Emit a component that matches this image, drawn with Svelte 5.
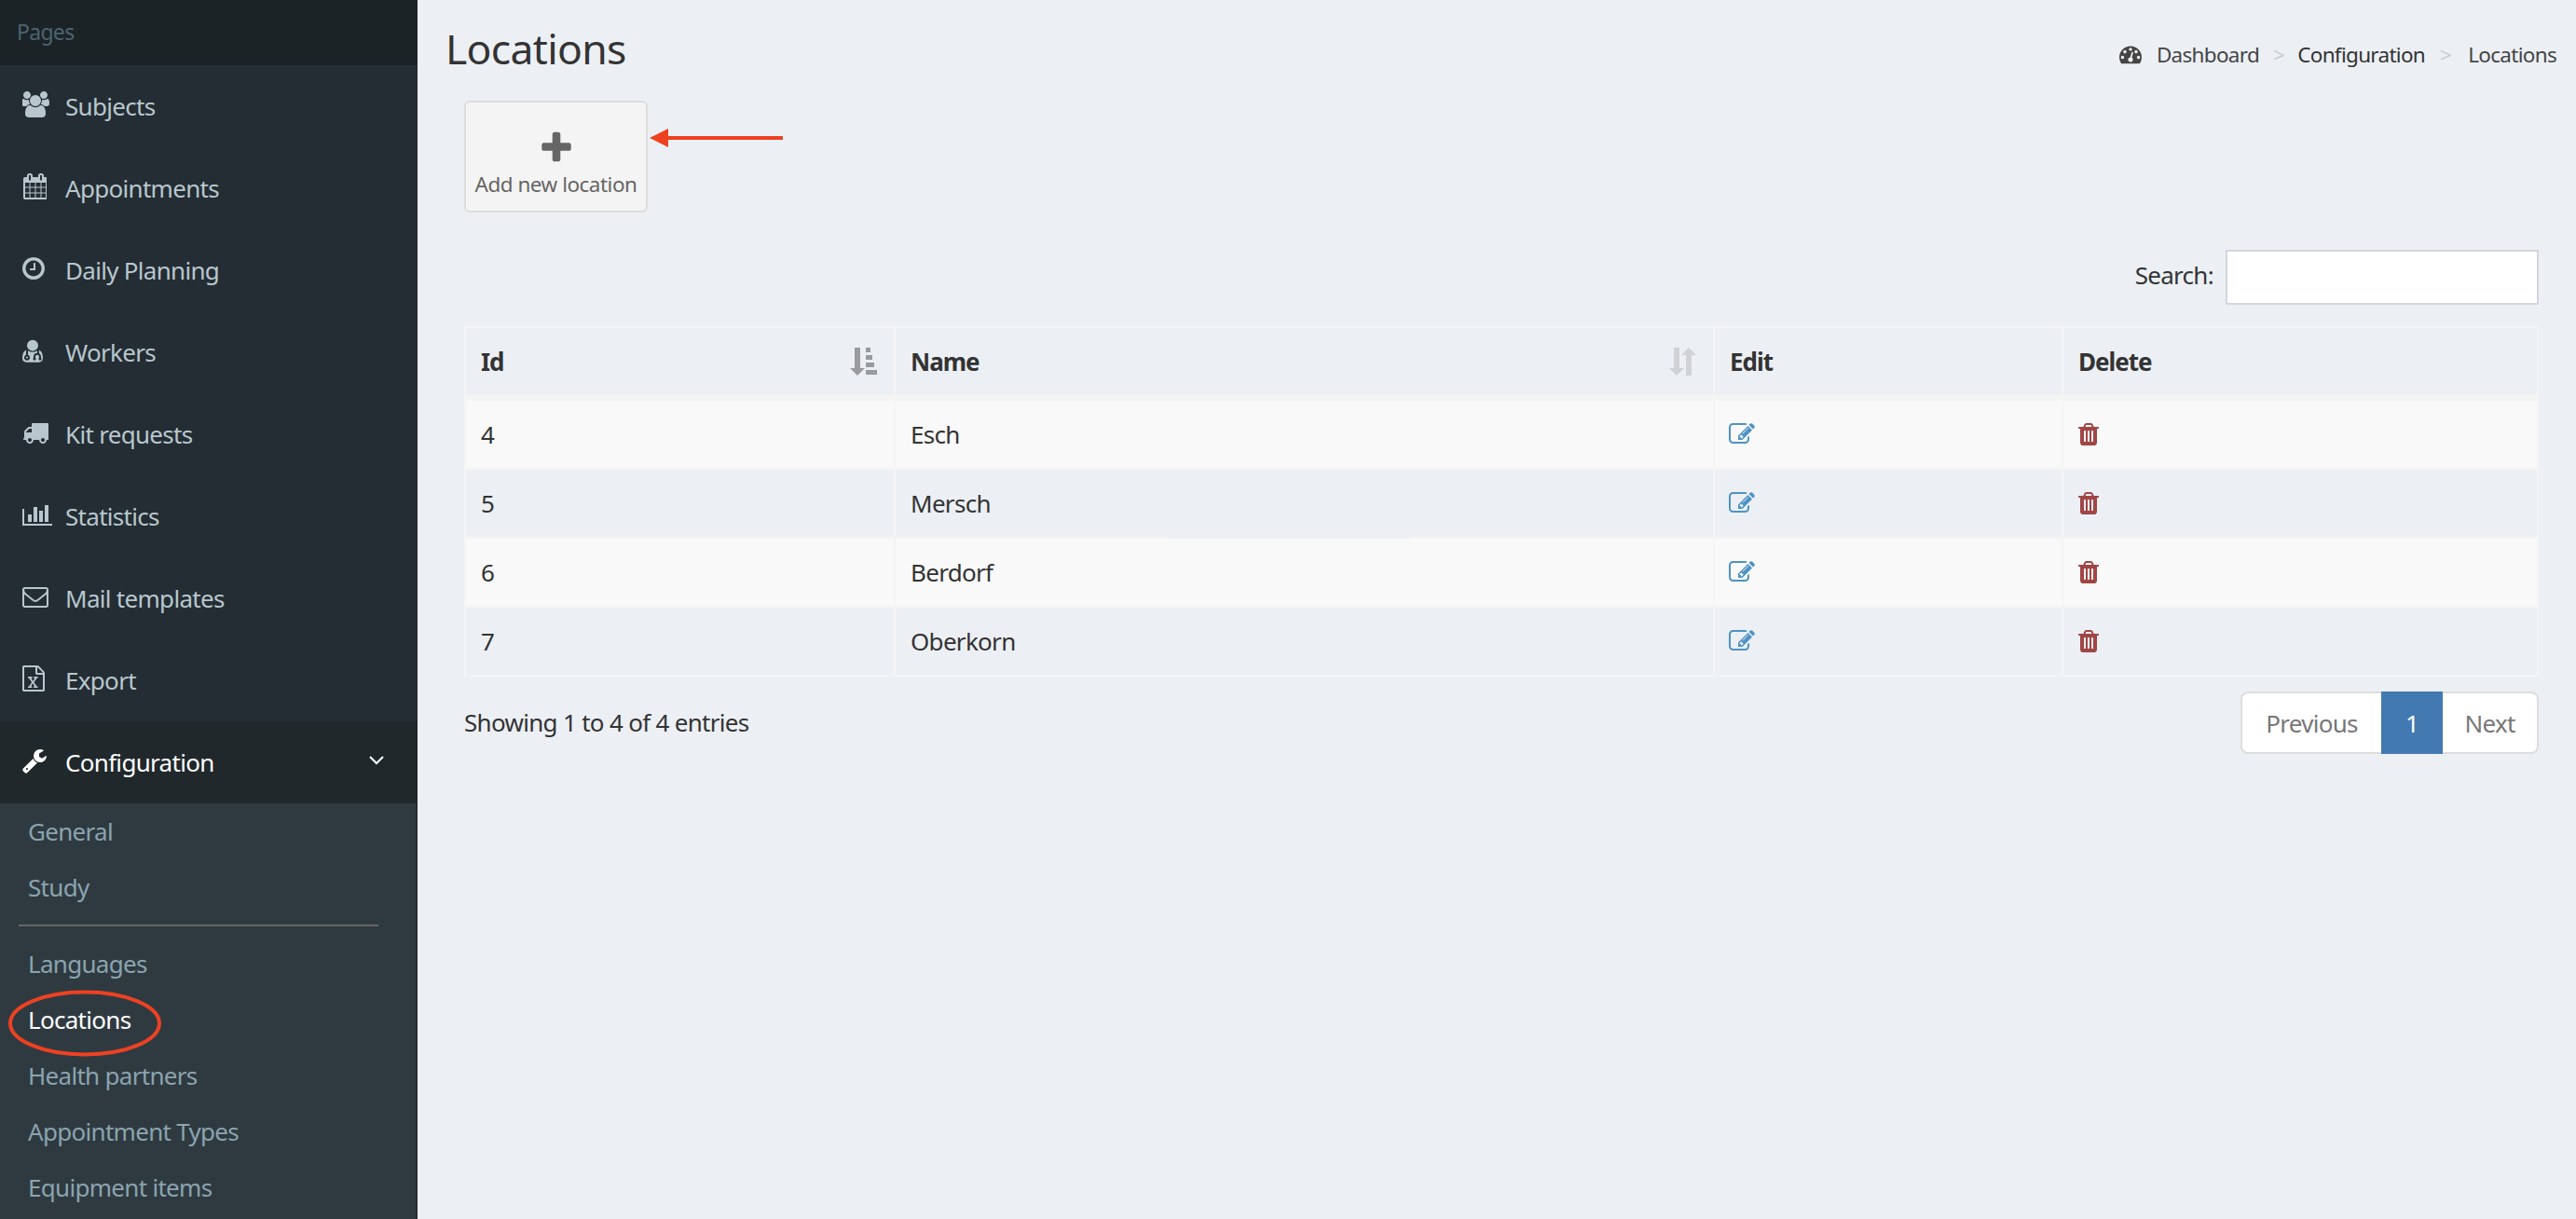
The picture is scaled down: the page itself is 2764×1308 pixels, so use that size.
<script>
    const ICONS = {
        users: { box: "0 0 2048 1792", d: "M529 896q-162 5-265 128h-134q-82 0-138-40.5t-56-118.5q0-353 124-353 6 0 43.5 21t97.5 42.5 119 21.5q67 0 133-23-5 37-5 66 0 139 81 256zm1071 637q0 120-73 189.5t-194 69.5h-874q-121 0-194-69.5t-73-189.5q0-53 3.5-103.5t14-109 26.5-108.5 43-97.5 62-81 85.5-53.5 111.5-20q10 0 43 21.5t73 48 107 48 135 21.5 135-21.5 107-48 73-48 43-21.5q61 0 111.5 20t85.5 53.5 62 81 43 97.5 26.5 108.5 14 109 3.5 103.5zm-1024-1277q0 106-75 181t-181 75-181-75-75-181 75-181 181-75 181 75 75 181zm704 384q0 159-112.5 271.5t-271.5 112.5-271.5-112.5-112.5-271.5 112.5-271.5 271.5-112.5 271.5 112.5 112.5 271.5zm576 225q0 78-56 118.5t-138 40.5h-134q-103-123-265-128 81-117 81-256 0-29-5-66 66 23 133 23 59 0 119-21.5t97.5-42.5 43.5-21q124 0 124 353zm-128-609q0 106-75 181t-181 75-181-75-75-181 75-181 181-75 181 75 75 181z" },
        calendar: { box: "0 0 1664 1792", d: "M192 1664h288v-288h-288v288zm352 0h320v-288h-320v288zm-352-352h288v-320h-288v320zm352 0h320v-320h-320v320zm-352-384h288v-288h-288v288zm736 736h320v-288h-320v288zm-384-736h320v-288h-320v288zm768 736h288v-288h-288v288zm-384-352h320v-320h-320v320zm-352-864v-288q0-13-9.5-22.5t-22.5-9.5h-64q-13 0-22.5 9.5t-9.5 22.5v288q0 13 9.5 22.5t22.5 9.5h64q13 0 22.5-9.5t9.5-22.5zm736 864h288v-320h-288v320zm-384-384h320v-288h-320v288zm384 0h288v-288h-288v288zm32-480v-288q0-13-9.5-22.5t-22.5-9.5h-64q-13 0-22.5 9.5t-9.5 22.5v288q0 13 9.5 22.5t22.5 9.5h64q13 0 22.5-9.5t9.5-22.5zm384-64v1280q0 52-38 90t-90 38h-1408q-52 0-90-38t-38-90v-1280q0-52 38-90t90-38h128v-96q0-66 47-113t113-47h64q66 0 113 47t47 113v96h384v-96q0-66 47-113t113-47h64q66 0 113 47t47 113v96h128q52 0 90 38t38 90z" },
        clock: { box: "0 0 1536 1792", d: "M896 544v448q0 14-9 23t-23 9h-320q-14 0-23-9t-9-23v-64q0-14 9-23t23-9h224v-352q0-14 9-23t23-9h64q14 0 23 9t9 23zm416 352q0-148-73-273t-198-198-273-73-273 73-198 198-73 273 73 273 198 198 273 73 273-73 198-198 73-273zm224 0q0 209-103 385.5t-279.5 279.5-385.5 103-385.5-103-279.5-279.5-103-385.5 103-385.5 279.5-279.5 385.5-103 385.5 103 279.5 279.5 103 385.5z" },
        userMd: { box: "0 0 1408 1792", d: "M384 1376q0 26-19 45t-45 19-45-19-19-45 19-45 45-19 45 19 19 45zm1024 69q0 121-73 190t-194 69h-874q-121 0-194-69t-73-190q0-68 5.5-131t24-138 47.5-132.5 81-103 120-60.5q-22 52-22 120v203q-58 20-93 70t-35 111q0 80 56 136t136 56 136-56 56-136q0-61-35.5-111t-92.5-70v-203q0-62 25-93 132 104 295 104t295-104q25 31 25 93v64q-106 0-181 75t-75 181v89q-32 29-32 71 0 40 28 68t68 28 68-28 28-68q0-42-32-71v-89q0-52 38-90t90-38 90 38 38 90v89q-32 29-32 71 0 40 28 68t68 28 68-28 28-68q0-42-32-71v-89q0-68-34.5-127.5t-93.5-93.5q0-10 .5-42.5t0-48-2.5-41.5-7-47-13-40q68 15 120 60.5t81 103 47.5 132.5 24 138 5.5 131zm-320-893q0 159-112.5 271.5t-271.5 112.5-271.5-112.5-112.5-271.5 112.5-271.5 271.5-112.5 271.5 112.5 112.5 271.5z" },
        truck: { box: "0 0 1792 1792", d: "M640 1408q0-52-38-90t-90-38-90 38-38 90 38 90 90 38 90-38 38-90zm-384-512h384v-256h-158q-13 0-22 9l-195 195q-9 9-9 22v30zm1280 512q0-52-38-90t-90-38-90 38-38 90 38 90 90 38 90-38 38-90zm256-1088v1024q0 15-4 26.5t-13.5 18.5-16.5 11.5-23.5 6-22.5 2-25.5 0-22.5-.5q0 106-75 181t-181 75-181-75-75-181h-384q0 106-75 181t-181 75-181-75-75-181h-64q-3 0-22.5.5t-25.5 0-22.5-2-23.5-6-16.5-11.5-13.5-18.5-4-26.5q0-26 19-45t45-19v-320q0-8-.5-35t0-38 2.5-34.5 6.5-37 14-30.5 22.5-30l198-198q19-19 50.5-32t58.5-13h160v-192q0-26 19-45t45-19h1024q26 0 45 19t19 45z" },
        chart: { box: "0 0 2048 1792", d: "M640 896v512h-256v-512h256zm384-512v1024h-256v-1024h256zm1024 1152v128h-2048v-1152h128v1024h1920zm-640-896v768h-256v-768h256zm384-384v1152h-256v-1152h256z" },
        envelope: { box: "0 0 1792 1792", d: "M1664 1504v-768q-32 36-69 66-268 206-426 338-51 43-83 67t-86.5 48.5-102.5 24.5h-2q-48 0-102.5-24.5t-86.5-48.5-83-67q-158-132-426-338-37-30-69-66v768q0 13 9.5 22.5t22.5 9.5h1472q13 0 22.5-9.5t9.5-22.5zm0-1051v-24.5l-.5-13-3-12.5-5.5-9-9-7.5-14-2.5h-1472q-13 0-22.5 9.5t-9.5 22.5q0 168 147 284 193 152 401 317 6 5 35 29.5t46 37.5 44.5 31.5 50.5 27.5 43 9h2q20 0 43-9t50.5-27.5 44.5-31.5 46-37.5 35-29.5q208-165 401-317 54-43 100.5-115.5t46.5-131.5zm128-37v1088q0 66-47 113t-113 47h-1472q-66 0-113-47t-47-113v-1088q0-66 47-113t113-47h1472q66 0 113 47t47 113z" },
        excel: { box: "0 0 1536 1792", d: "M1468 380q28 28 48 76t20 88v1152q0 40-28 68t-68 28h-1344q-40 0-68-28t-28-68v-1600q0-40 28-68t68-28h896q40 0 88 20t76 48zm-444-244v376h376q-10-29-22-41l-313-313q-12-12-41-22zm384 1528v-1024h-416q-40 0-68-28t-28-68v-416h-768v1536h1280zM383 1432v106h281v-106h-75l103-161q5-7 10-16.5t7.5-13.5 3.5-4h2q1 4 5 10 2 4 4.5 7.5t6 8 6.5 8.5l107 161h-76v106h291v-106h-68l-192-273 195-282h67v-107h-279v107h74l-103 159q-4 7-10 16.5t-9 13.5l-2 3h-2q-1-4-5-10-6-11-17-23l-106-159h76v-107h-290v107h68l189 272-194 283h-68z" },
        wrench: { box: "0 0 1664 1792", d: "M384 1472q0-26-19-45t-45-19-45 19-19 45 19 45 45 19 45-19 19-45zm644-420l-682 682q-37 37-90 37-52 0-91-37l-106-108q-38-36-38-90 0-53 38-91l681-681q39 98 114.5 173.5t173.5 114.5zm634-435q0 39-23 106-47 134-164.5 217.5t-258.5 83.5q-185 0-316.5-131.5t-131.5-316.5 131.5-316.5 316.5-131.5q58 0 121.5 16.5t107.5 46.5q16 11 16 28t-16 28l-293 169v224l193 107q5-3 79-48.5t135.5-81 70.5-35.5q15 0 23.5 10t8.5 25z" },
        plus: { box: "0 0 1408 1792", d: "M1408 736v192q0 40-28 68t-68 28h-416v416q0 40-28 68t-68 28h-192q-40 0-68-28t-28-68v-416h-416q-40 0-68-28t-28-68v-192q0-40 28-68t68-28h416v-416q0-40 28-68t68-28h192q40 0 68 28t28 68v416h416q40 0 68 28t28 68z" },
        dashboard: { box: "0 0 1792 1792", d: "M384 1152q0-53-37.5-90.5t-90.5-37.5-90.5 37.5-37.5 90.5 37.5 90.5 90.5 37.5 90.5-37.5 37.5-90.5zm192-448q0-53-37.5-90.5t-90.5-37.5-90.5 37.5-37.5 90.5 37.5 90.5 90.5 37.5 90.5-37.5 37.5-90.5zm428 481l101-382q6-26-7.5-48.5t-38.5-29.5-48 6.5-30 39.5l-101 382q-60 5-107 43.5t-63 98.5q-20 77 20 146t117 89 146-20 89-117q16-60-6-117t-72-91zm660-33q0-53-37.5-90.5t-90.5-37.5-90.5 37.5-37.5 90.5 37.5 90.5 90.5 37.5 90.5-37.5 37.5-90.5zm-640-640q0-53-37.5-90.5t-90.5-37.5-90.5 37.5-37.5 90.5 37.5 90.5 90.5 37.5 90.5-37.5 37.5-90.5zm448 192q0-53-37.5-90.5t-90.5-37.5-90.5 37.5-37.5 90.5 37.5 90.5 90.5 37.5 90.5-37.5 37.5-90.5zm320 448q0 261-141 483-19 29-54 29h-1402q-35 0-54-29-141-221-141-483 0-182 71-348t191-286 286-191 348-71 348 71 286 191 191 286 71 348z" },
        edit: { box: "0 0 1792 1792", d: "M888 1184l116-116-152-152-116 116v56h96v96h56zm440-720q-16-16-33 1l-350 350q-17 17-1 33t33-1l350-350q17-17 1-33zm80 594v190q0 119-84.5 203.5t-203.5 84.5h-832q-119 0-203.5-84.5t-84.5-203.5v-832q0-119 84.5-203.5t203.5-84.5h832q63 0 117 25 15 7 18 23 3 17-9 29l-49 49q-14 14-32 8-23-6-45-6h-832q-66 0-113 47t-47 113v832q0 66 47 113t113 47h832q66 0 113-47t47-113v-126q0-13 9-22l64-64q15-15 35-7t20 29zm-96-738l288 288-672 672h-288v-288zm444 132l-92 92-288-288 92-92q28-28 68-28t68 28l152 152q28 28 28 68t-28 68z" },
        trash: { box: "0 0 1408 1792", d: "M512 1376v-704q0-14-9-23t-23-9h-64q-14 0-23 9t-9 23v704q0 14 9 23t23 9h64q14 0 23-9t9-23zm256 0v-704q0-14-9-23t-23-9h-64q-14 0-23 9t-9 23v704q0 14 9 23t23 9h64q14 0 23-9t9-23zm256 0v-704q0-14-9-23t-23-9h-64q-14 0-23 9t-9 23v704q0 14 9 23t23 9h64q14 0 23-9t9-23zm-544-992h448l-48-117q-7-9-17-11h-317q-10 2-17 11zm928 32v64q0 14-9 23t-23 9h-96v948q0 83-47 143.5t-113 60.5h-832q-66 0-113-61.5t-47-145.5v-945h-96q-14 0-23-9t-9-23v-64q0-14 9-23t23-9h309l70-167q15-37 54-63t79-26h320q40 0 79 26t54 63l70 167h309q14 0 23 9t9 23z" },
    };

    const menu = [
        { label: "Subjects", icon: "users" },
        { label: "Appointments", icon: "calendar" },
        { label: "Daily Planning", icon: "clock" },
        { label: "Workers", icon: "userMd" },
        { label: "Kit requests", icon: "truck" },
        { label: "Statistics", icon: "chart" },
        { label: "Mail templates", icon: "envelope" },
        { label: "Export", icon: "excel" },
    ];

    const subGroups = [["General", "Study"], ["Languages", "Locations", "Health partners", "Appointment Types", "Equipment items"]];
    const rows = [
        { id: 4, name: "Esch" },
        { id: 5, name: "Mersch" },
        { id: 6, name: "Berdorf" },
        { id: 7, name: "Oberkorn" },
    ];
</script>

{#snippet fa(name, cls)}
    <svg class={cls} viewBox={ICONS[name].box} aria-hidden="true"><path d={ICONS[name].d} fill="currentColor" /></svg>
{/snippet}

<div class="layout">
    <aside class="sidebar">
        <div class="sidebar-head">Pages</div>
        <ul class="menu">
            {#each menu as item}
                <li class="menu-item">
                    <span class="menu-icon">{@render fa(item.icon, "icon-fill")}</span>
                    {item.label}
                </li>
            {/each}
            <li class="menu-item active">
                <span class="menu-icon">{@render fa("wrench", "icon-fill")}</span>
                Configuration
                <svg class="chevron" viewBox="0 0 16 12"><path d="M1 2l7 7 7-7" fill="none" stroke="currentColor" stroke-width="2" /></svg>
            </li>
        </ul>
        <div class="submenu">
            {#each subGroups as group, g}
                {#if g > 0}<hr class="sub-divider" />{/if}
                {#each group as sub}
                    <div class="sub-item" class:current={sub === "Locations"}>{sub}</div>
                {/each}
            {/each}
        </div>
    </aside>

    <main class="main">
        <header class="page-head">
            <h1>Locations</h1>
            <nav class="crumbs">
                {@render fa("dashboard", "crumb-icon")}
                <span class="crumb">Dashboard</span>
                <span class="sep first">&gt;</span>
                <span class="crumb dark">Configuration</span>
                <span class="sep">&gt;</span>
                <span class="crumb last">Locations</span>
            </nav>
        </header>

        <section class="content">
            <button class="add-btn">
                {@render fa("plus", "add-icon")}
                <span>Add new location</span>
            </button>

            <div class="search-row">
                <label for="search">Search:</label>
                <input id="search" type="search" />
            </div>

            <table>
                <colgroup>
                    <col class="c1" /><col class="c2" /><col class="c3" /><col class="c4" />
                </colgroup>
                <thead>
                    <tr>
                        <th class="sorted">
                            Id
                            <svg class="sort-icon dark-sort" viewBox="0 0 29 30">
                                <path d="M5 0h6v22h5l-8 8-8-8h5z" />
                                <path d="M17 0h5v5h-5zM17 8h7v5h-7zM17 16h9v5h-9zM17 24h12v5h-12z" />
                            </svg>
                        </th>
                        <th class="sorted">
                            Name
                            <svg class="sort-icon" viewBox="0 0 29 30">
                                <path d="M5 0h6v22h5l-8 8-8-8h5z" />
                                <path d="M21 0l8 8h-5v22h-6v-22h-5z" />
                            </svg>
                        </th>
                        <th>Edit</th>
                        <th>Delete</th>
                    </tr>
                </thead>
                <tbody>
                    {#each rows as row, i}
                        <tr class:odd={i % 2 === 0}>
                            <td>{row.id}</td>
                            <td class="name-cell">
                                {row.name}
                                {#if row.id === 5}<span class="retouch"></span>{/if}
                            </td>
                            <td>{@render fa("edit", "edit-icon")}</td>
                            <td>{@render fa("trash", "trash-icon")}</td>
                        </tr>
                    {/each}
                </tbody>
            </table>

            <div class="table-foot">
                <div class="info">Showing 1 to 4 of 4 entries</div>
                <div class="pager">
                    <span class="page">Previous</span>
                    <span class="page on">1</span>
                    <span class="page">Next</span>
                </div>
            </div>
        </section>
    </main>

    <!-- red annotations drawn over the screenshot -->
    <svg class="marks" viewBox="0 0 2764 1308">
        <ellipse cx="91" cy="1098" rx="80" ry="33.500" fill="none" stroke="#ee4122" stroke-width="4" />
        <path d="M840 146h-123v-8l-20 10 20 10v-8h123z" fill="#ee4122" />
    </svg>
</div>

<style>
    :global(body) {
        margin: 0;
        background: #ecf0f5;
    }

    .layout {
        position: relative;
        display: flex;
        height: 1308px;
        overflow: hidden;
        font-family: "Noto Sans", sans-serif;
        font-size: 26px;
        letter-spacing: -0.7px;
        color: #333;
    }

    /* sidebar */
    .sidebar {
        flex: 0 0 448px;
        display: flex;
        flex-direction: column;
        background: #242d33;
    }

    .sidebar-head {
        flex: none;
        height: 70px;
        padding: 20px 18px 0;
        box-sizing: border-box;
        background: #1c2327;
        color: #4b646f;
        font-size: 23px;
        line-height: 28px;
    }

    .menu {
        flex: none;
        margin: 0;
        padding: 0;
        list-style: none;
    }

    .menu-item {
        display: flex;
        align-items: center;
        height: 88px;
        padding-left: 24px;
        color: #b8c7ce;
    }

    .menu-item.active {
        background: #20282b;
        color: #fff;
    }

    .menu-icon {
        display: flex;
        flex: none;
        width: 46px;
        height: 28px;
        margin-top: -4px;
    }

    :global(.icon-fill) {
        height: 100%;
        width: auto;
    }

    .chevron {
        width: 16px;
        height: 12px;
        margin-top: -4px;
        margin-left: auto;
        margin-right: 36px;
    }

    .submenu {
        flex: 1;
        margin-right: 2px;
        background: #2f3a40;
        color: #8aa4af;
    }

    .sub-item {
        height: 60px;
        padding-left: 30px;
        line-height: 60px;
    }

    .sub-item.current {
        color: #fff;
    }

    .sub-divider {
        width: 386px;
        height: 2px;
        margin: 10px 0 10px 20px;
        border: 0;
        background: #666;
    }

    /* main column */
    .main {
        flex: 1;
        min-width: 0;
    }

    .page-head {
        display: flex;
        justify-content: space-between;
        height: 108px;
        padding: 0 21px 0 30px;
    }

    h1 {
        margin: 24px 0 0;
        font-size: 44.500px;
        font-weight: 400;
        line-height: 56px;
    }

    .crumbs {
        display: flex;
        align-items: center;
        height: 30px;
        margin-top: 43px;
        font-size: 22.500px;
        color: #444;
    }

    :global(.crumb-icon) {
        width: 24px;
        height: 24px;
        margin-right: 16px;
        color: #444;
    }

    .crumb.dark {
        color: #333;
    }

    .sep {
        margin: 0 18px 0 16px;
        color: #ccc;
    }

    .sep.first {
        margin: 0 14px 0 15px;
    }

    .content {
        padding: 0 40px 0 50px;
    }

    .add-btn {
        display: flex;
        flex-direction: column;
        align-items: center;
        width: 197px;
        height: 120px;
        padding: 31px 0 0;
        box-sizing: border-box;
        border: 2px solid #ddd;
        border-radius: 6px;
        background: #f4f4f4;
        color: #666;
        font: inherit;
        font-size: 22.500px;
        letter-spacing: -0.5px;
    }

    :global(.add-icon) {
        width: 32px;
        height: 40px;
        margin-top: -2px;
        margin-bottom: 3px;
    }

    .search-row {
        display: flex;
        justify-content: flex-end;
        align-items: center;
        gap: 13px;
        margin: 40px 0 23px;
    }

    .search-row label {
        margin-top: -5px;
    }

    .search-row input {
        width: 336px;
        height: 59px;
        padding: 0;
        box-sizing: border-box;
        border: 2px solid #d2d6de;
        background: #fff;
    }

    table {
        width: 100%;
        table-layout: fixed;
        border-collapse: collapse;
        border: 2px solid #f4f4f4;
    }

    .c1 { width: 461px; }
    .c2 { width: 879px; }
    .c3 { width: 374px; }

    th, td {
        padding: 0 16px;
        border: 2px solid #f4f4f4;
        text-align: left;
    }

    th {
        position: relative;
        height: 72px;
        border-bottom-width: 6px;
        font-weight: 700;
        letter-spacing: -1px;
    }

    td {
        height: 72px;
    }

    tr.odd td {
        background: #f9f9f9;
    }

    .name-cell {
        position: relative;
    }

    /* the lighter patch left along the bottom of this row in the screenshot */
    .retouch {
        position: absolute;
        bottom: -3px;
        left: 293px;
        width: 260px;
        height: 4px;
        background: #ecf0f5;
    }

    .sort-icon {
        position: absolute;
        top: 21px;
        right: 18px;
        width: 29px;
        height: 30px;
        fill: #d0d2d6;
    }

    .sort-icon.dark-sort {
        fill: #9a9b9e;
    }

    :global(.edit-icon) {
        display: block;
        width: 28px;
        height: 28px;
        margin-left: -1px;
        color: #4f93c4;
    }

    :global(.trash-icon) {
        display: block;
        width: 22px;
        height: 28px;
        color: #a04644;
    }

    .table-foot {
        display: flex;
        justify-content: space-between;
        align-items: flex-start;
        margin-top: 16px;
    }

    .info {
        line-height: 68px;
        margin-top: -1px;
    }

    .pager {
        display: flex;
        height: 67px;
        box-sizing: border-box;
        border: 2px solid #ddd;
        border-radius: 8px;
        background: #fff;
    }

    .page {
        display: flex;
        align-items: center;
        justify-content: center;
        width: 149px;
        color: #777;
    }

    .page.on {
        width: 66px;
        margin: -2px 0;
        background: #4279b1;
        color: #fff;
    }

    .page:last-child {
        width: 101px;
    }

    .marks {
        position: absolute;
        top: 0;
        left: 0;
        width: 2764px;
        height: 1308px;
        pointer-events: none;
    }
</style>
